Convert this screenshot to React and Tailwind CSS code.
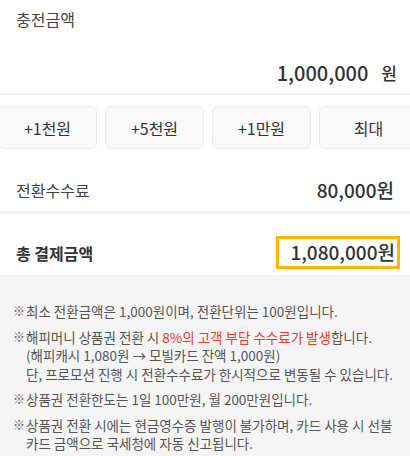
import React from 'react';

const FONT = { fontFamily: '"Noto Sans CJK KR", "Noto Sans", sans-serif' };

const quickAmounts = ['+1천원', '+5천원', '+1만원', '최대'];

const Note = ({ children }) => (
  <div className="flex">
    <span className="w-[13px] shrink-0 text-[12px]">※</span>
    <div>{children}</div>
  </div>
);

export default function App() {
  return (
    <div className="w-[410px] h-[456px] bg-white overflow-hidden text-[#333]" style={FONT}>
      {/* 충전금액 */}
      <div className="pl-4 pr-[13px] pt-[7px] pb-[6px] border-b-2 border-[#f0f0f0]">
        <div className="text-[16px] leading-6 text-[#444]">충전금액</div>
        <div className="mt-[28px] flex justify-end items-center text-[20px] leading-7 font-medium text-[#333]">
          <span>1,000,000</span>
          <span className="ml-[13px] text-[17px]">원</span>
        </div>
      </div>

      {/* 빠른 금액 버튼 */}
      <div className="mt-[11px] flex gap-2 -ml-[2px] overflow-hidden">
        {quickAmounts.map((label) => (
          <button
            key={label}
            className="w-[99px] h-[43px] shrink-0 rounded-md border border-[#ececec] bg-[#f9f9f9] text-[16px] text-[#333]"
          >
            {label}
          </button>
        ))}
      </div>

      {/* 전환수수료 */}
      <div className="px-4 pt-[27px] pb-[8px] border-b border-[#e8e8e8] flex justify-between items-center">
        <span className="text-[16px] leading-7 text-[#444]">전환수수료</span>
        <span className="text-[19px] leading-7 font-medium text-[#333]">80,000원</span>
      </div>

      {/* 총 결제금액 */}
      <div className="pl-4 pr-[10px] pt-[23px] pb-[6px] flex justify-between items-center">
        <span className="text-[16px] leading-7 font-semibold text-[#333]">총 결제금액</span>
        <span className="w-[124px] h-[33px] border-[3px] border-[#f9b800] flex items-center justify-end pr-[2px] text-[19px] font-medium text-[#333]">
          1,080,000원
        </span>
      </div>

      {/* 안내 */}
      <div className="bg-[#f5f5f5] h-full px-[13px] pt-[27px] text-[13.5px] leading-[18.5px] text-[#555] flex flex-col gap-[7px]">
        <Note>최소 전환금액은 1,000원이며, 전환단위는 100원입니다.</Note>
        <Note>
          해피머니 상품권 전환 시 <span className="text-[#e23b34]">8%의 고객 부담 수수료가 발생</span>합니다.
          <br />
          (해피캐시 1,080원 → 모빌카드 잔액 1,000원)
          <br />
          단, 프로모션 진행 시 전환수수료가 한시적으로 변동될 수 있습니다.
        </Note>
        <Note>상품권 전환한도는 1일 100만원, 월 200만원입니다.</Note>
        <Note>
          상품권 전환 시에는 현금영수증 발행이 불가하며, 카드 사용 시 선불
          <br />
          카드 금액으로 국세청에 자동 신고됩니다.
        </Note>
      </div>
    </div>
  );
}
